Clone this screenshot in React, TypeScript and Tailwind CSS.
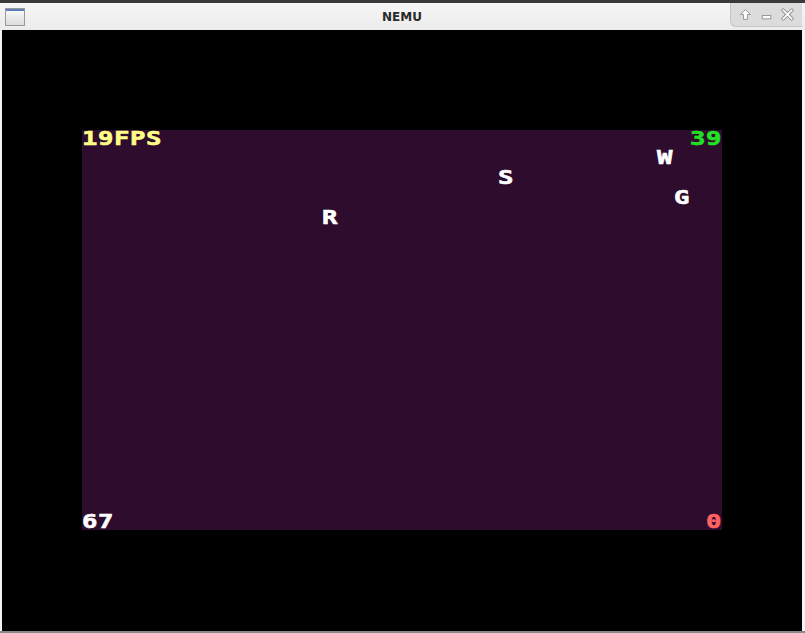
const pix = "font-['DejaVu_Sans_Mono',monospace] font-bold text-[20px] leading-none [-webkit-text-stroke:0.6px_currentColor]";

function Pix({ text, className = '' }: { text: string; className?: string }) {
  return (
    <span className={`inline-flex ${pix} ${className}`}>
      {text.split('').map((c, i) => (
        <span key={i} className="inline-block w-[16px] overflow-visible">
          <span className="inline-block origin-left scale-x-[1.28]">{c}</span>
        </span>
      ))}
    </span>
  );
}

const sprites = [
  { ch: 'W', x: 575, y: 16 },
  { ch: 'S', x: 416, y: 36 },
  { ch: 'G', x: 592, y: 56 },
  { ch: 'R', x: 240, y: 76 },
];

export default function App() {
  return (
    <div className="w-[805px] h-[633px] bg-[#3a3a3a] overflow-hidden flex flex-col pt-[3px]">
      <div className="flex-1 flex flex-col bg-[#f2f2f2] rounded-t-[4px] border-b-2 border-[#8a8a8a]">
        {/* title bar */}
        <div className="h-[27px] flex items-center relative bg-gradient-to-b from-[#f6f6f6] to-[#ececec]">
          <div className="ml-[5px] w-[20px] h-[18px] border border-[#9a9a9a] bg-gradient-to-b from-[#fafafa] to-[#dcdcdc] flex flex-col">
            <div className="h-[2px] bg-[#5a7fb8]" />
          </div>
          <div className="flex-1 text-center font-['DejaVu_Sans',sans-serif] font-bold text-[12px] text-[#2a2a2a] pr-[26px]">NEMU</div>
          <div className="absolute right-[3px] top-0 h-[24px] w-[72px] bg-[#dcdcdc] rounded-bl-[6px] border-l border-b border-[#c4c4c4] flex items-center justify-around px-[4px]">
            <svg width="13" height="13" viewBox="0 0 12 12">
              <path d="M6 1.5 L10.5 6 H7.8 V10.5 H4.2 V6 H1.5 Z" fill="#fff" stroke="#8a8a8a" strokeWidth="0.8" />
            </svg>
            <svg width="13" height="13" viewBox="0 0 12 12">
              <rect x="2" y="7" width="8" height="3" fill="#fff" stroke="#8a8a8a" strokeWidth="0.8" />
            </svg>
            <svg width="13" height="13" viewBox="0 0 12 12">
              <path d="M2 2 L10 10 M10 2 L2 10" stroke="#8a8a8a" strokeWidth="3.2" strokeLinecap="round" />
              <path d="M2 2 L10 10 M10 2 L2 10" stroke="#fff" strokeWidth="1.6" strokeLinecap="round" />
            </svg>
          </div>
        </div>
        {/* client area */}
        <div className="flex-1 ml-[2px] mr-[3px] bg-black flex justify-center items-start pt-[100px]">
          <div className="w-[640px] h-[400px] bg-[#2d0c2d] relative flex flex-col justify-between">
            <div className="flex justify-between mt-[-2px]">
              <Pix text="19FPS" className="text-[#ffff88]" />
              <Pix text="39" className="text-[#22e022]" />
            </div>
            {sprites.map((s) => (
              <span key={s.ch} className="absolute text-white" style={{ left: s.x, top: s.y }}>
                <Pix text={s.ch} />
              </span>
            ))}
            <div className="flex justify-between mb-[-1px]">
              <Pix text="67" className="text-white" />
              <Pix text="0" className="text-[#ff6262]" />
            </div>
          </div>
        </div>
      </div>
    </div>
  );
}
